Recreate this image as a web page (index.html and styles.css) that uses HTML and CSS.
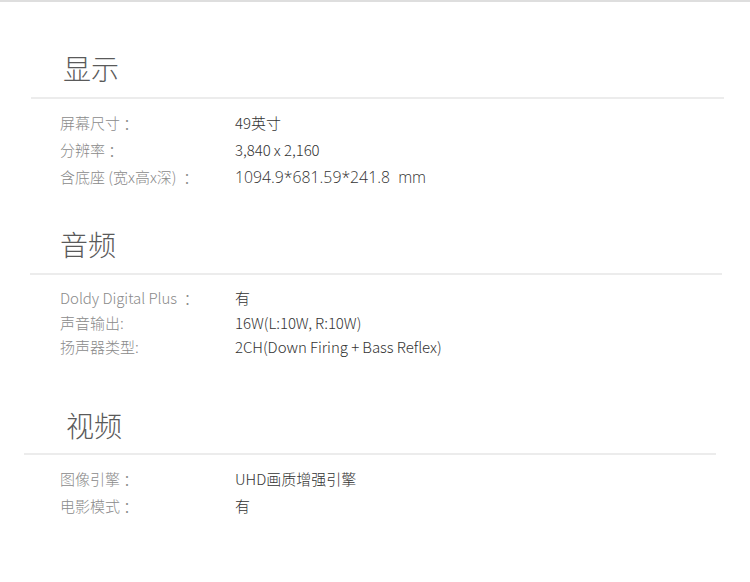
FILE: index.html
```html
<!DOCTYPE html>
<html lang="zh-CN">
<head>
<meta charset="utf-8">
<title>规格参数</title>
<link rel="stylesheet" href="styles.css">
</head>
<body>
<div class="topbar"></div>
<main class="specs">
  <section class="spec spec--display">
    <h2 class="spec__title">显示</h2>
    <dl class="spec__rows">
      <dt>屏幕尺寸 ：</dt><dd>49英寸</dd>
      <dt>分辨率 ：</dt><dd class="latin">3,840 x 2,160</dd>
      <dt>含底座 (宽x高x深)  ：</dt><dd class="dim">1094.9*681.59*241.8&nbsp; mm</dd>
    </dl>
  </section>
  <section class="spec spec--audio">
    <h2 class="spec__title">音频</h2>
    <dl class="spec__rows">
      <dt><span class="latin">Doldy Digital Plus</span>  ：</dt><dd>有</dd>
      <dt>声音输出:</dt><dd class="latin">16W(L:10W, R:10W)</dd>
      <dt>扬声器类型:</dt><dd class="latin">2CH(Down Firing + Bass Reflex)</dd>
    </dl>
  </section>
  <section class="spec spec--video">
    <h2 class="spec__title">视频</h2>
    <dl class="spec__rows">
      <dt>图像引擎 ：</dt><dd>UHD画质增强引擎</dd>
      <dt>电影模式 ：</dt><dd>有</dd>
    </dl>
  </section>
</main>
</body>
</html>
```
FILE: styles.css
```css
html, body {
  margin: 0;
  padding: 0;
  background: #ffffff;
}
body {
  font-family: "Noto Sans CJK SC", "Noto Sans", sans-serif;
  width: 750px;
  height: 582px;
  overflow: hidden;
}
.topbar {
  height: 2px;
  background: #dedede;
}
.specs {
  display: flex;
  flex-direction: column;
}
.spec__title {
  margin: 0;
  font-size: 28px;
  line-height: 28px;
  font-weight: 300;
  color: #5a5a5a;
  border-bottom: 2px solid #ececec;
}
.spec__rows {
  margin: 0;
  display: grid;
  grid-template-columns: 175px 1fr;
  font-size: 15px;
  line-height: 27px;
  font-weight: 300;
}
.spec__rows dt {
  color: #8a8a8a;
  white-space: pre;
}
.spec__rows dd {
  margin: 0;
  color: #333333;
}
.spec__rows .latin {
  letter-spacing: -0.05px;
}
.spec__rows .dim {
  font-family: "Open Sans", "Noto Sans", sans-serif;
  font-size: 15.8px;
  padding-top: 2px;
  line-height: 25px;
}

.spec--display {
  margin: 52px 0 0 31px;
  width: 693px;
}
.spec--display .spec__title {
  padding: 0 0 15px 32px;
}
.spec--display .spec__rows {
  padding: 10px 0 0 29px;
}

.spec--audio {
  margin: 40px 0 0 30px;
  width: 692px;
}
.spec--audio .spec__title {
  padding: 0 0 15px 30px;
}
.spec--audio .spec__rows {
  padding: 11px 0 0 30px;
  line-height: 24.5px;
}

.spec--video {
  margin: 51px 0 0 24px;
  width: 692px;
}
.spec--video .spec__title {
  padding: 0 0 14px 42px;
}
.spec--video .spec__rows {
  padding: 10px 0 0 36px;
}
```
